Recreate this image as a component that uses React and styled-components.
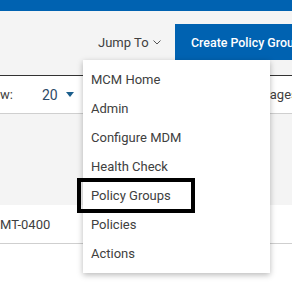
import styled, { createGlobalStyle } from "styled-components";

const Global = createGlobalStyle`
    html, body {
        margin: 0;
        padding: 0;
        overflow: hidden;
        background: #ffffff;
        font-family: Roboto, "Liberation Sans", sans-serif;
    }
`;

//전체
const Page = styled.div`
    width: 330px;
    height: 296px;
    display: flex;
    flex-direction: column;
    background: #ffffff;
    color: #333333;
`;

const TopBar = styled.div`
    height: 11px;
    background: #0062b1;
`;

//툴바
const Toolbar = styled.div`
    height: 64px;
    display: flex;
    align-items: flex-start;
    padding: 13px 0 0 98px;
    box-sizing: border-box;
    background: #f4f4f4;
`;

const JumpWrap = styled.div`
    position: relative;
    width: 77px;
    height: 36px;
    flex-shrink: 0;
`;

const JumpTo = styled.div`
    height: 36px;
    display: flex;
    align-items: center;
    gap: 4px;
    font-size: 13px;
    color: #404040;
`;

const CreateButton = styled.button`
    height: 36px;
    flex-shrink: 0;
    padding: 0 16px;
    border: none;
    background: #0062b1;
    color: #ffffff;
    font-family: Roboto, "Liberation Sans", sans-serif;
    font-size: 12.4px;
    font-weight: 500;
    white-space: nowrap;
`;

//드롭다운 메뉴
const Menu = styled.ul`
    position: absolute;
    top: 36px;
    left: -15px;
    width: 187px;
    margin: 0;
    padding: 5px 0;
    list-style: none;
    background: #ffffff;
    box-shadow: 0 2px 6px rgba(0, 0, 0, 0.28);
    z-index: 2;
`;

const MenuItem = styled.li`
    position: relative;
    height: 29px;
    display: flex;
    align-items: center;
    padding-left: 8px;
    font-size: 13px;
    color: #404040;
`;

const Highlight = styled.div`
    position: absolute;
    left: -6px;
    top: -3px;
    width: 118px;
    height: 35px;
    border: 4px solid #000000;
    box-sizing: border-box;
`;

//페이지 컨트롤
const PagerRow = styled.div`
    height: 37px;
    display: flex;
    align-items: center;
    border-top: 1px solid #333333;
    border-bottom: 1px solid #cfcfcf;
    font-size: 13px;
    color: #404040;
`;

const PerPage = styled.div`
    display: flex;
    align-items: center;
    gap: 8px;
    margin-left: 29px;
    color: #2c4a68;
    font-size: 14px;
`;

const Pages = styled.div`
    margin-left: 188px;
    white-space: nowrap;
`;

//테이블
const TableHead = styled.div`
    height: 91px;
    background: #f4f4f4;
`;

const TableRow = styled.div`
    height: 38px;
    display: flex;
    align-items: center;
    border-bottom: 1px solid #cfcfcf;
    font-size: 13px;
    color: #404040;
`;

const items = ["MCM Home", "Admin", "Configure MDM", "Health Check", "Policy Groups", "Policies", "Actions"];

export default function App() {
    return (
        <Page>
            <Global />
            <TopBar />
            <Toolbar>
                <JumpWrap>
                    <JumpTo>
                        Jump To
                        <svg width="8" height="5" viewBox="0 0 8 5">
                            <polyline points="0.5,0.5 4,4 7.5,0.5" fill="none" stroke="#555" strokeWidth="1" />
                        </svg>
                    </JumpTo>
                    <Menu>
                        {items.map((item) => (
                            <MenuItem key={item}>
                                {item}
                                {item === "Policy Groups" && <Highlight />}
                            </MenuItem>
                        ))}
                    </Menu>
                </JumpWrap>
                <CreateButton>Create Policy Group</CreateButton>
            </Toolbar>
            <PagerRow>
                w:
                <PerPage>
                    20
                    <svg width="8" height="5" viewBox="0 0 8 5">
                        <polygon points="0,0 8,0 4,5" fill="#1b5e8c" />
                    </svg>
                </PerPage>
                <Pages>Pages</Pages>
            </PagerRow>
            <TableHead />
            <TableRow>MT-0400</TableRow>
        </Page>
    );
}
